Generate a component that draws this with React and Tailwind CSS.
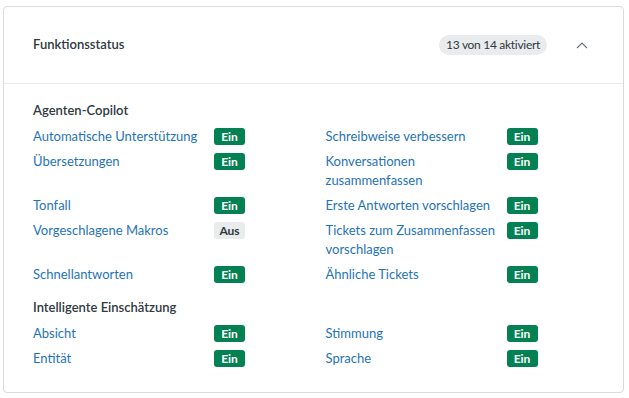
const groups = [
  {
    title: 'Agenten-Copilot',
    items: [
      ['Automatische Unterstützung', true],
      ['Schreibweise verbessern', true],
      ['Übersetzungen', true],
      ['Konversationen zusammenfassen', true],
      ['Tonfall', true],
      ['Erste Antworten vorschlagen', true],
      ['Vorgeschlagene Makros', false],
      ['Tickets zum Zusammenfassen vorschlagen', true],
      ['Schnellantworten', true],
      ['Ähnliche Tickets', true],
    ],
  },
  {
    title: 'Intelligente Einschätzung',
    items: [
      ['Absicht', true],
      ['Stimmung', true],
      ['Entität', true],
      ['Sprache', true],
    ],
  },
];

function Status({ on }) {
  return on ? (
    <span className="flex h-[17px] w-[31px] items-center justify-center rounded-[3px] bg-[#038153] text-[12px] leading-none font-bold text-white">
      Ein
    </span>
  ) : (
    <span className="flex h-[17px] w-[31px] items-center justify-center rounded-[3px] bg-[#e9ebed] text-[12px] leading-none font-bold text-[#2f3941]">
      Aus
    </span>
  );
}

export default function App() {
  return (
    <div className="min-h-screen bg-white pt-[6px] pl-[3px] pr-[5px] font-['Lato',sans-serif] text-[13px]">
      <div className="rounded-[4px] border border-[#d8dcde]">
        {/* Header */}
        <div className="flex h-[77px] items-center border-b border-[#e9ebed] pl-[29px] pr-[35px]">
          <h2 className="flex-1 font-semibold text-[#2f3941]">Funktionsstatus</h2>
          <span className="rounded-full bg-[#e9ebed] px-[7px] py-[1px] text-[12px] tracking-[-0.3px] text-[#2f3941]">
            13 von 14 aktiviert
          </span>
          <svg className="ml-[29px]" width="12" height="7" viewBox="0 0 12 7" fill="none">
            <path d="M1 6l5-5 5 5" stroke="#68737d" strokeWidth="1.1" />
          </svg>
        </div>

        {/* Body */}
        <div className="flex flex-col gap-[13px] px-[29px] pt-[16px] pb-[24px]">
          {groups.map((g) => (
            <div key={g.title}>
              <h3 className="mb-[7px] leading-[20px] font-semibold text-[#2f3941]">{g.title}</h3>
              <div className="grid grid-cols-2 gap-x-[24px] gap-y-[6px]">
                {g.items.map(([label, on]) => (
                  <div key={label} className="flex items-start">
                    <span className="w-[181px] pr-[4px] leading-[19px] text-[#1f73b7]">{label}</span>
                    <div className="flex pt-[1px]">
                      <Status on={on} />
                    </div>
                  </div>
                ))}
              </div>
            </div>
          ))}
        </div>
      </div>
    </div>
  );
}
